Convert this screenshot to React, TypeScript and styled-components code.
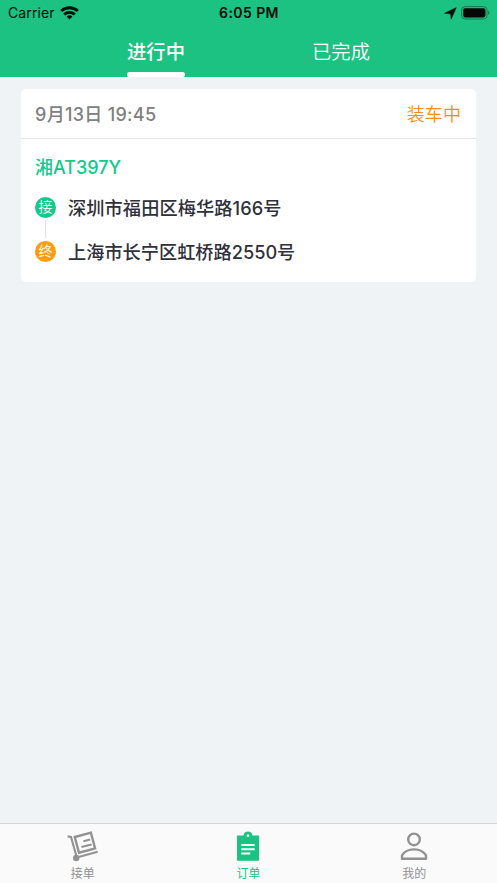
import React from 'react';
import styled, { createGlobalStyle } from 'styled-components';

const GlobalStyle = createGlobalStyle`
  * { box-sizing: border-box; }
  html, body { margin: 0; padding: 0; }
  body {
    font-family: Inter, "Noto Sans CJK SC", sans-serif;
    background: #eff3f5;
  }
`;

const Screen = styled.div`
  display: flex;
  flex-direction: column;
  width: 497px;
  height: 883px;
  overflow: hidden;
  background: #eff3f5;
`;

const Header = styled.header`
  display: flex;
  flex-direction: column;
  flex: none;
  height: 77px;
  background: #1cc281;
`;

const StatusBar = styled.div`
  display: grid;
  grid-template-columns: 1fr auto 1fr;
  align-items: center;
  height: 26px;
  padding: 0 7px 0 8px;
  color: #020d08;
`;

const Carrier = styled.div`
  display: flex;
  align-items: center;
  gap: 5px;
  font-size: 14px;
  line-height: 26px;
  letter-spacing: 0.1px;
`;

const Clock = styled.div`
  font-size: 14px;
  font-weight: 600;
  line-height: 26px;
  letter-spacing: 0.42px;
`;

const StatusIcons = styled.div`
  display: flex;
  align-items: center;
  justify-content: flex-end;
  gap: 4px;
`;

const Tabs = styled.nav`
  display: flex;
  justify-content: center;
  flex: 1;
`;

const Tab = styled.div<{ $active?: boolean }>`
  display: flex;
  flex-direction: column;
  align-items: center;
  justify-content: space-between;
  width: 185px;
  color: #fff;
  font-size: 19.3px;
  font-weight: ${(p) => (p.$active ? 500 : 350)};
  line-height: 46px;
`;

const TabLabel = styled.span`
  height: 46px;
  padding-top: 3px;
`;

const Underline = styled.span`
  width: 58px;
  height: 5px;
  border-radius: 2.5px 2.5px 2px 2px;
  background: #fff;
`;

const Content = styled.main`
  flex: 1;
  padding: 12px 21px;
`;

const Card = styled.article`
  height: 193px;
  border-radius: 5px;
  background: #fff;
`;

const CardHead = styled.div`
  display: flex;
  justify-content: space-between;
  height: 50px;
  padding: 0 15px 0 14px;
  border-bottom: 1px solid #e6e7e8;
  line-height: 51px;
  font-size: 18px;
`;

const DateText = styled.span`
  color: #808080;
  font-weight: 500;
  letter-spacing: 0.3px;
`;

const Status = styled.span`
  color: #ff8c1a;
  font-weight: 350;
  letter-spacing: 0.1px;
`;

const CardBody = styled.div`
  padding: 17px 14px 0;
`;

const Plate = styled.div`
  color: #11ca8a;
  font-size: 18px;
  font-weight: 500;
  line-height: 24px;
`;

const Stop = styled.div`
  display: flex;
  align-items: center;
  gap: 12px;
  height: 22px;
`;

const StopList = styled.div`
  margin-top: 16px;
`;

const Badge = styled.span<{ $color: string }>`
  width: 21px;
  height: 21px;
  border-radius: 50%;
  background: ${(p) => p.$color};
  color: #fff;
  font-size: 14px;
  font-weight: 350;
  line-height: 20px;
  text-align: center;
`;

const Address = styled.span<{ $spacing: number }>`
  padding-top: 2px;
  color: #30303c;
  font-size: 18.2px;
  font-weight: 500;
  line-height: 22px;
  letter-spacing: ${(p) => p.$spacing}px;
  white-space: nowrap;
`;

const Connector = styled.div`
  width: 1px;
  height: 18px;
  margin: 2px 0 2px 10px;
  background: #e2e3e5;
`;

const BottomBar = styled.nav`
  display: grid;
  grid-template-columns: repeat(3, 1fr);
  flex: none;
  height: 60px;
  border-top: 1px solid #d3d5d6;
  background: #fafafa;
`;

const BottomItem = styled.div<{ $active?: boolean }>`
  display: flex;
  flex-direction: column;
  align-items: center;
  padding-top: 6px;
  color: ${(p) => (p.$active ? '#1cc281' : '#929292')};
`;

const BottomLabel = styled.span`
  margin-top: 3px;
  font-size: 12px;
  line-height: 18px;
`;

const WifiIcon = () => (
  <svg width="19" height="14" viewBox="0 0 19 14" fill="none" stroke="currentColor" strokeWidth="2.9">
    <path d="M1.2 5C5.8 .7 13.2 .7 17.8 5" />
    <path d="M4.2 8.5C7.2 5.7 11.8 5.7 14.8 8.5" />
    <path d="M6.6 10.4C8.3 9 10.7 9 12.4 10.4L9.5 13.4Z" fill="currentColor" stroke="none" />
  </svg>
);

const LocationIcon = () => (
  <svg width="13" height="13" viewBox="0 0 13 13" fill="currentColor">
    <path d="M12.3 .6 L7.2 12.2 L6.5 6.8 L.6 6.3 Z" stroke="currentColor" strokeWidth=".5" strokeLinejoin="round" />
  </svg>
);

const BatteryIcon = () => (
  <svg width="29" height="14" viewBox="0 0 29 14">
    <rect x=".6" y=".6" width="25.4" height="12.4" rx="3.5" fill="none" stroke="#117a51" />
    <rect x="2.2" y="2.2" width="22.2" height="9.2" rx="1.8" fill="#020805" />
    <path d="M27.2 4.8C28.9 5.3 28.9 8.4 27.2 8.9Z" fill="#117a51" />
  </svg>
);

const CartIcon = () => (
  <svg width="32" height="32" viewBox="0 0 32 32" fill="none" stroke="currentColor" strokeWidth="2.1">
    <path d="M.6 6.4 L4 7 L9.4 26" />
    <path d="M11.5 27.1 L30.7 21.8" />
    <circle cx="9.2" cy="28" r="3.2" fill="currentColor" stroke="none" />
    <path d="M7.8 7 L23.9 2.7 L28.1 18.4 L12 22.7 Z" strokeWidth="2.4" />
    <path d="M16.4 11.2 L23.2 9.4 M14.4 17.1 L24.6 14.4" />
  </svg>
);

const ClipboardIcon = () => (
  <svg width="32" height="32" viewBox="0 0 32 32">
    <path
      fill="currentColor"
      fillRule="evenodd"
      d="M5 5.4H11.5C11.8 3 13.5 1.5 16 1.5S20.2 3 20.5 5.4H27V30.8H5ZM16 4.2A1.4 1.4 0 1 0 16 7A1.4 1.4 0 1 0 16 4.2Z"
    />
    <path d="M9.3 15H22.7M9.3 19.2H22.7M9.3 23.4H18.2" stroke="#fff" strokeWidth="2" />
  </svg>
);

const PersonIcon = () => (
  <svg width="32" height="32" viewBox="0 0 32 32" fill="none" stroke="currentColor" strokeWidth="2.4">
    <circle cx="16" cy="9.4" r="5.8" />
    <path d="M4 28.7V25.4C6.5 21.4 10.8 19.4 16 19.4S25.5 21.4 28 25.4V28.7Z" strokeLinejoin="round" />
  </svg>
);

const navItems = [
  { label: '接单', Icon: CartIcon, active: false },
  { label: '订单', Icon: ClipboardIcon, active: true },
  { label: '我的', Icon: PersonIcon, active: false },
];

export default function App() {
  return (
    <>
      <GlobalStyle />
      <Screen>
        <Header>
          <StatusBar>
            <Carrier>
              Carrier
              <WifiIcon />
            </Carrier>
            <Clock>6:05 PM</Clock>
            <StatusIcons>
              <LocationIcon />
              <BatteryIcon />
            </StatusIcons>
          </StatusBar>
          <Tabs>
            <Tab $active>
              <TabLabel>进行中</TabLabel>
              <Underline />
            </Tab>
            <Tab>
              <TabLabel>已完成</TabLabel>
            </Tab>
          </Tabs>
        </Header>
        <Content>
          <Card>
            <CardHead>
              <DateText>9月13日 19:45</DateText>
              <Status>装车中</Status>
            </CardHead>
            <CardBody>
              <Plate>湘AT397Y</Plate>
              <StopList>
                <Stop>
                  <Badge $color="#11ca8a">接</Badge>
                  <Address $spacing={0.1}>深圳市福田区梅华路166号</Address>
                </Stop>
                <Connector />
                <Stop>
                  <Badge $color="#ff9c10">终</Badge>
                  <Address $spacing={0}>上海市长宁区虹桥路2550号</Address>
                </Stop>
              </StopList>
            </CardBody>
          </Card>
        </Content>
        <BottomBar>
          {navItems.map(({ label, Icon, active }) => (
            <BottomItem key={label} $active={active}>
              <Icon />
              <BottomLabel>{label}</BottomLabel>
            </BottomItem>
          ))}
        </BottomBar>
      </Screen>
    </>
  );
}
